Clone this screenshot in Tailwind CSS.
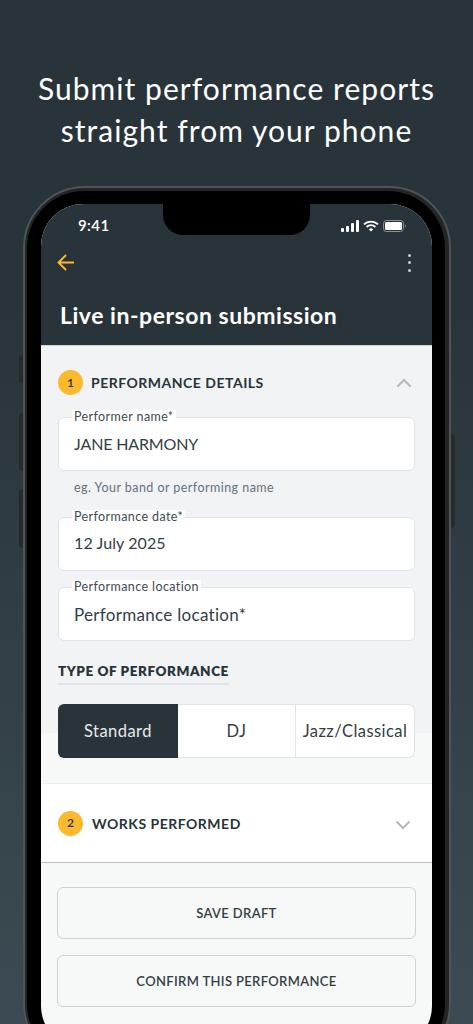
<!DOCTYPE html>
<html lang="en">
<head>
    <meta charset="UTF-8">
    <meta name="viewport" content="width=device-width, initial-scale=1.0">
    <title>Submit performance reports</title>
    <script src="https://cdn.jsdelivr.net/npm/@tailwindcss/browser@4"></script>
</head>
<body class="font-['Lato',sans-serif]">
    <div class="h-[1024px] w-[473px] overflow-hidden bg-gradient-to-b from-[#29343a] from-30% to-[#3c4b53]">
        <h1 class="pt-[67px] text-center text-[30px] leading-[42px] font-normal tracking-[1.05px] text-white">
            Submit performance reports<br>straight from your phone
        </h1>

        <!-- phone -->
        <div class="relative ml-[23px] mt-[35px] h-[880px] w-[428px]">
            <div class="absolute left-[-4px] top-[169px] h-[28px] w-[4px] rounded-l-sm bg-[#272a2d]"></div>
            <div class="absolute left-[-4px] top-[227px] h-[58px] w-[4px] rounded-l-sm bg-[#272a2d]"></div>
            <div class="absolute left-[-4px] top-[303px] h-[59px] w-[4px] rounded-l-sm bg-[#272a2d]"></div>
            <div class="absolute right-[-4px] top-[248px] h-[94px] w-[4px] rounded-r-sm bg-[#272a2d]"></div>

            <div class="h-full rounded-[62px] border-[2px] border-[#4f5457] bg-[#232527] pb-[3px] pl-[2px] pr-[4px] pt-[3px]">
                <div class="h-full rounded-[57px] bg-black pb-[12px] pl-[14px] pr-[13px] pt-[13px]">
                    <div class="relative h-[844px] overflow-hidden rounded-[42px] bg-[#f7f8f8]">
                        <!-- notch -->
                        <div class="absolute left-[122px] top-0 h-[31px] w-[147px] rounded-b-[20px] bg-black"></div>

                        <div class="bg-[#29343a]">
                            <div class="flex h-[44px] items-center justify-between pb-[1px] pl-[37px] pr-[26px]">
                                <span class="text-[15px] font-semibold tracking-[0.4px] text-white">9:41</span>
                                <div class="flex items-center gap-[4px]">
                                    <svg width="18" height="12" viewBox="0 0 18 12" fill="#fff">
                                        <rect x="0" y="8" width="3" height="4" rx="1"/>
                                        <rect x="5" y="6" width="3" height="6" rx="1"/>
                                        <rect x="10" y="3" width="3" height="9" rx="1"/>
                                        <rect x="15" y="0" width="3" height="12" rx="1"/>
                                    </svg>
                                    <svg width="16" height="12" viewBox="0 0 16 12" fill="none" stroke="#fff" stroke-width="1.8">
                                        <path d="M1 4.4a10 10 0 0 1 14 0"/>
                                        <path d="M3.6 7a6.2 6.2 0 0 1 8.800 0"/>
                                        <path d="M8 11.500 5.900 9.400a3 3 0 0 1 4.200 0z" fill="#fff" stroke="none"/>
                                    </svg>
                                    <svg width="23" height="12" viewBox="0 0 23 12" fill="none">
                                        <rect x="0.500" y="0.500" width="20" height="11" rx="3" stroke="#8b9296"/>
                                        <rect x="2" y="2" width="17" height="8" rx="1.500" fill="#fff"/>
                                        <path d="M22 4.200c.6.300.9.900.9 1.800s-.3 1.500-.9 1.800z" fill="#8b9296"/>
                                    </svg>
                                </div>
                            </div>

                            <div class="flex h-[28px] items-center justify-between pl-[16px] pr-[21px] pt-[1px]">
                                <svg width="18" height="17" viewBox="0 0 18 17" fill="none" stroke="#fbb92b" stroke-width="1.900">
                                    <path d="M17 8.500H1.500M9 1 1.500 8.500 9 16"/>
                                </svg>
                                <div class="flex flex-col gap-[4.500px]">
                                    <span class="size-[3px] rounded-full bg-[#c6cacc]"></span>
                                    <span class="size-[3px] rounded-full bg-[#c6cacc]"></span>
                                    <span class="size-[3px] rounded-full bg-[#c6cacc]"></span>
                                </div>
                            </div>

                            <h2 class="px-[19px] pb-[14px] pt-[24px] text-[23px] leading-[31px] font-bold tracking-[0.53px] text-white">Live in-person submission</h2>
                        </div>

                        <!-- section 1 -->
                        <section class="relative h-[388px] border-t border-[#cfd4d7] bg-[#f1f3f5] px-[17px]">
                            <div class="flex h-[71px] items-center pt-[2px]">
                                <span class="flex size-[25px] items-center justify-center rounded-full bg-[#fbb92b] text-[12px] font-semibold text-[#29343a]">1</span>
                                <span class="ml-[8px] text-[14px] font-bold tracking-[0.5px] text-[#29343a]">PERFORMANCE DETAILS</span>
                                <svg class="ml-auto mr-[3px]" width="16" height="10" viewBox="0 0 16 10" fill="none" stroke="#b4b9bc" stroke-width="2">
                                    <path d="M1.500 8.500 8 2l6.500 6.500"/>
                                </svg>
                            </div>

                            <div class="relative h-[54px] rounded-[6px] border border-[#e0e4ea] bg-white px-[15px] pt-[15px] text-[16px] leading-[22px] tracking-[-0.15px] text-[#333e45]">
                                JANE HARMONY
                                <span class="absolute left-[13px] top-[-8px] bg-white px-[2px] text-[12.500px] leading-[14px] font-normal tracking-[0.4px] text-[#414b52]">Performer name*</span>
                            </div>
                            <p class="px-[16px] pt-[9px] text-[12.500px] leading-[16px] tracking-[0.45px] text-[#66717d]">eg. Your band or performing name</p>

                            <div class="relative mt-[21px] h-[54px] rounded-[6px] border border-[#e0e4ea] bg-white px-[15px] pt-[14px] text-[16px] leading-[22px] tracking-[0.1px] text-[#333e45]">
                                12 July 2025
                                <span class="absolute left-[13px] top-[-8px] bg-white px-[2px] text-[12.500px] leading-[14px] tracking-[0.4px] text-[#414b52]">Performance date*</span>
                            </div>

                            <div class="relative mt-[16px] h-[54px] rounded-[6px] border border-[#e0e4ea] bg-white px-[15px] pt-[16px] text-[17px] leading-[22px] tracking-[0.3px] text-[#333e45]">
                                Performance location*
                                <span class="absolute left-[13px] top-[-8px] bg-white px-[2px] text-[12.500px] leading-[14px] tracking-[0.4px] text-[#414b52]">Performance location</span>
                            </div>

                            <div class="mt-[21px] w-fit border-b-2 border-[#e0e2e8] pb-[3px] text-[13.500px] leading-[18px] font-extrabold tracking-[0.55px] text-[#29343a]">TYPE OF PERFORMANCE</div>

                            <div class="mt-[19px] flex h-[54px] w-[357px] text-[16.500px] tracking-[0.45px] text-[#333e45]">
                                <div class="flex w-[120px] items-center justify-center rounded-l-[6px] bg-[#29343a] pt-[1px] text-[#e8eaeb]">Standard</div>
                                <div class="flex w-[118px] items-center justify-center border-y border-r border-[#e0e4ea] bg-white pt-[1px]">DJ</div>
                                <div class="flex flex-1 items-center justify-center whitespace-nowrap rounded-r-[6px] border-y border-r border-[#e0e4ea] bg-white pt-[1px]">Jazz/Classical</div>
                            </div>
                        </section>

                        <div class="h-[50px]"></div>

                        <!-- section 2 -->
                        <section class="flex h-[80px] items-center border-y border-t-[#eceef0] border-b-[#b8bec2] bg-white px-[17px]">
                            <span class="flex size-[25px] items-center justify-center rounded-full bg-[#fbb92b] text-[12px] font-semibold text-[#29343a]">2</span>
                            <span class="ml-[9px] text-[14px] font-bold tracking-[0.5px] text-[#29343a]">WORKS PERFORMED</span>
                            <svg class="ml-auto mr-[4px] mt-[3px]" width="16" height="10" viewBox="0 0 16 10" fill="none" stroke="#b4b9bc" stroke-width="2">
                                <path d="M1.500 1.500 8 8l6.500-6.500"/>
                            </svg>
                        </section>

                        <div class="flex flex-col gap-[16px] px-[16px] pt-[24px]">
                            <div class="flex h-[52px] items-center justify-center rounded-[6px] border border-[#ccd1d6] pt-[1px] text-[13px] font-semibold tracking-[0.35px] text-[#333e45]">SAVE DRAFT</div>
                            <div class="flex h-[52px] items-center justify-center rounded-[6px] border border-[#ccd1d6] pt-[1px] text-[13px] font-semibold tracking-[0.35px] text-[#333e45]">CONFIRM THIS PERFORMANCE</div>
                        </div>
                    </div>
                </div>
            </div>
        </div>
    </div>
</body>
</html>
